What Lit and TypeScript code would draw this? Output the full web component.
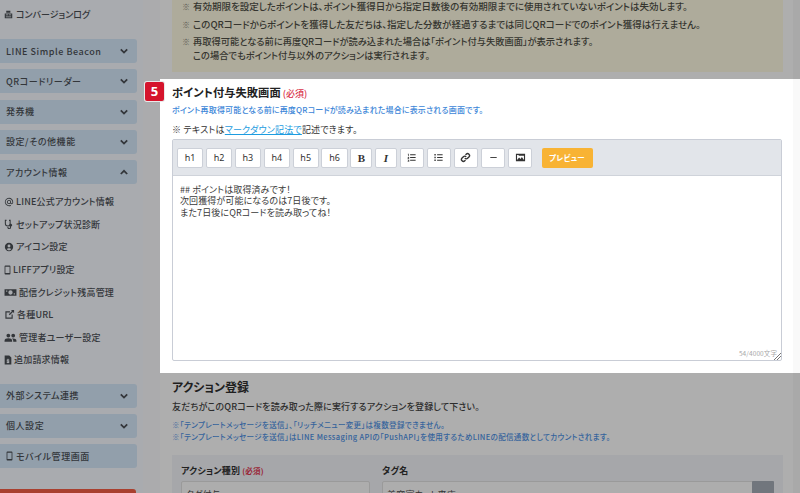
import { LitElement, html, css, svg } from "lit";
import { customElement } from "lit/decorators.js";

const I = (d: any, w = 12, h = w, vb = "0 0 24 24") => html`<svg class="ic" width=${w} height=${h} viewBox=${vb} fill="currentColor">${d}</svg>`;
const icons: Record<string, any> = {
  log: svg`<path d="M2 9h20v13H2zM6 2h11v5H6z"/><path d="M5 12h6v2H5zM13 12h6v2h-6zM5 17h14v2H5z" fill="#a9abaf"/>`,
  at: svg`<path d="M12 2a10 10 0 1 0 5 18.7l-1-1.8A8 8 0 1 1 20 12v1.5a1.5 1.5 0 0 1-3 0V12a5 5 0 1 0-1.5 3.5A3.5 3.5 0 0 0 22 13.500V12A10 10 0 0 0 12 2zm0 13a3 3 0 1 1 0-6 3 3 0 0 1 0 6z"/>`,
  steth: svg`<path d="M2 2v9a7 7 0 0 0 14 0V2h-4v2.500h1.500V11a4.500 4.500 0 0 1-9 0V4.500H6V2zM8 19v1a4.500 4.500 0 0 0 9 0v-2a3.500 3.500 0 1 0-2.500 0v2a2 2 0 0 1-4 0v-1z"/>`,
  user: svg`<path fill-rule="evenodd" d="M12 2a10 10 0 1 1 0 20 10 10 0 0 1 0-20zm0 4a3.500 3.500 0 1 0 0 7 3.500 3.500 0 0 0 0-7zm0 9c-2.500 0-4.500 1-5.500 2.500a8 8 0 0 0 11 0C16.500 16 14.500 15 12 15z"/>`,
  phone: svg`<path fill-rule="evenodd" d="M7 1h10a2 2 0 0 1 2 2v18a2 2 0 0 1-2 2H7a2 2 0 0 1-2-2V3a2 2 0 0 1 2-2zm0 3v15h10V4z"/>`,
  money: svg`<path fill-rule="evenodd" d="M1 6h22v12H1zm11 2a4 4 0 1 0 0 8 4 4 0 0 0 0-8zM4 8.500v2h2v-2zm14 5v2h2v-2z"/>`,
  ext: svg`<path d="M3 5h10v2.500H5.500v11h11V12H19v9H3z"/><path d="M15 2h7v7l-2.500-2.500-7 7-2-2 7-7z"/>`,
  users: svg`<path d="M8 5a3.500 3.500 0 1 1 0 7 3.500 3.500 0 0 1 0-7zM17 5a3.500 3.500 0 1 1 0 7 3.500 3.500 0 0 1 0-7zM1 20v-2c0-3 3-4.500 7-4.500s7 1.500 7 4.500v2zM17 20v-2c0-2-1-3.300-2.300-4.200 4.800-.6 8.300 1 8.300 4.200v2z"/>`,
  bill: svg`<path fill-rule="evenodd" d="M4 1h11l5 5v17H4zm7 8v2H9v5h4v1H9v2h2v1h2v-1h2v-5h-4v-1h4v-2h-2V9z"/>`,
  ol: svg`<path d="M9 5h12v2H9zM9 11h12v2H9zM9 17h12v2H9zM4 4h2v5H4.600V5.500H4zM3.500 11H7v1L5.200 14H7v1H3.500v-1L5.300 12H3.500zM3.500 17H7v4H3.500v-1h2.200v-.5H4.500v-.8h1.200v-.7H3.500z"/>`,
  ul: svg`<path d="M9 5h12v2H9zM9 11h12v2H9zM9 17h12v2H9zM3 4.500h3v3H3zM3 10.500h3v3H3zM3 16.500h3v3H3z"/>`,
  link: svg`<path fill="none" stroke="currentColor" stroke-width="3" d="M10.500 13.500a4 4 0 0 0 6 .3l3-3a4.200 4.200 0 0 0-6-6l-1.500 1.500M13.500 10.500a4 4 0 0 0-6-.3l-3 3a4.200 4.200 0 0 0 6 6l1.500-1.500"/>`,
  hr: svg`<path d="M5 11h14v2H5z"/>`,
  img: svg`<path fill-rule="evenodd" d="M2 4h20v16H2zm2.500 4v9.500L9 12l3 3 3-4 4.500 6.500V8zM8 6.500H4.500V8H8z"/>`,
};

const chev = (up = false) => html`<svg class="chev" width="8" height="6" viewBox="0 0 10 7" fill="none" stroke="currentColor" stroke-width="2.200"><path d=${up ? "M1 6l4-4 4 4" : "M1 1.500l4 4 4-4"}/></svg>`;

@customElement("app-side")
class AppSide extends LitElement {
  static styles = css`
    :host { display: flex; flex-direction: column; width: 143px; flex: none; background: #a9abaf; overflow: hidden; color: #33363a; height: 493px; font-feature-settings: "palt"; }
    .log { display: flex; align-items: center; gap: 3px; height: 15px; margin: 7px 0 17px 4px; font-size: 9px; font-weight: 500; letter-spacing: 0; white-space: nowrap; flex: none; }
    .grp { box-sizing: border-box; display: flex; flex: none; align-items: center; justify-content: space-between; width: 137px; height: 24px; margin-bottom: 6.300px; padding: 0 9px 0 6px; background: #929fab; border-radius: 0 3px 3px 0; font-size: 9px; font-weight: 500; letter-spacing: .55px; white-space: nowrap; }
    .sub { display: flex; flex: none; flex-direction: column; padding: 0 0 12.400px 4px; }
    .it { display: flex; flex: none; align-items: center; gap: 2px; height: 22.600px; font-size: 9px; font-weight: 500; letter-spacing: .2px; white-space: nowrap; }
    .bottom { margin-top: 14px; width: 136px; height: 30px; background: #a9402f; border-radius: 0 3px 3px 0; flex: none; }
    .ph { justify-content: flex-start; gap: 3px; }
    .ic { flex: none; }
  `;
  render() {
    const grp = (t: string, up = false) => html`<div class="grp"><span>${t}</span>${chev(up)}</div>`;
    const it = (ic: string, t: string, w = 10, h = w, vb = "0 0 24 24") => html`<div class="it">${I(icons[ic], w, h, vb)}<span>${t}</span></div>`;
    return html`
      <div class="log">${I(icons.log, 9)}<span>コンバージョンログ</span></div>
      ${grp("LINE Simple Beacon")}${grp("QRコードリーダー")}${grp("発券機")}${grp("設定/その他機能")}${grp("アカウント情報", true)}
      <div class="sub">
        ${it("at", "LINE公式アカウント情報")}${it("steth", "セットアップ状況診断", 10)}${it("user", "アイコン設定", 10)}${it("phone", "LIFFアプリ設定", 7, 10, "4 0 16 24")}${it("money", "配信クレジット残高管理", 13, 13)}${it("ext", "各種URL", 11)}${it("users", "管理者ユーザー設定", 13, 13)}${it("bill", "追加請求情報", 8, 10, "3 0 18 24")}
      </div>
      ${grp("外部システム連携")}${grp("個人設定")}
      <div class="grp ph">${I(icons.phone, 7, 10, "4 0 16 24")}<span>モバイル管理画面</span></div>
      <div class="bottom"></div>
    `;
  }
}

@customElement("app-root")
class AppRoot extends LitElement {
  static styles = css`
    :host { display: block; width: 800px; height: 493px; overflow: hidden; font-family: "Noto Sans CJK JP", "Noto Sans", sans-serif; background: #ababad; color: #2c2c2c; font-feature-settings: "palt"; }
    .page { display: flex; height: 493px; position: relative; }
    .main { flex: 1; min-width: 0; display: flex; flex-direction: column; margin-left: 17px; background: #aeaeae; }
    .strip { position: absolute; right: 0; top: 0; bottom: 0; width: 7px; background: rgba(0,0,0,.025); }
    .note { box-sizing: border-box; height: 72px; margin: 0 17px 0 12px; background: #aeab9b; padding: 0 0 0 10px; font-size: 9.500px; font-weight: 500; color: #35352f; letter-spacing: 0; line-height: 13.500px; flex: none; }
    .note div { display: flex; white-space: nowrap; margin-bottom: 4px; }
    .note b { font-weight: 500; width: 11px; flex: none; color: #55544c; font-size: 8px; }
    .note .tight { font-size: 9.250px; }
    .gap { height: 7px; flex: none; }
    .panel { position: relative; height: 294px; background: #fff; flex: none; padding: 4px 18px 0 12px; box-sizing: border-box; }
    .badge { position: absolute; left: -15px; top: 3px; width: 19px; height: 19px; background: #d5142c; border-radius: 2px; box-shadow: 0 0 0 1px #e9e9e9; color: #fff; font: 700 13px/19px "Noto Sans", sans-serif; text-align: center; }
    h2 { margin: 0; font-size: 11.300px; font-weight: 700; line-height: 18px; color: #222; white-space: nowrap; letter-spacing: 0; }
    h2 small { font-size: 9px; font-weight: 500; color: #d9324a; margin-left: 2px; }
    .hint { font-size: 8px; font-weight: 500; color: #3c86d8; line-height: 12px; margin-top: 1px; white-space: nowrap; letter-spacing: .15px; }
    .md { font-size: 9px; line-height: 14px; margin-top: 7px; color: #333; white-space: nowrap; letter-spacing: .2px; }
    .md a { color: #1d9ce0; text-decoration: underline; }
    .editor { box-sizing: border-box; width: 610px; height: 222px; margin-top: 2px; border: 1px solid #c9cdd6; border-radius: 2px; background: #fff; position: relative; display: flex; flex-direction: column; }
    .tools { box-sizing: border-box; height: 36px; flex: none; background: #e2e5ea; border-bottom: 1px solid #cfd3da; display: flex; align-items: center; padding: 0 0 0 4px; gap: 2.600px; }
    .btn { box-sizing: border-box; flex: none; width: 24.500px; height: 20px; background: #fff; border: 1px solid #ccd0d8; border-radius: 2px; display: flex; align-items: center; justify-content: center; font: 400 9px "Noto Sans", sans-serif; color: #333; }
    .btn.h { width: 26.300px; }
    .btn.s { width: 22px; font: 700 11px "Liberation Serif", serif; }
    .btn.i { width: 22px; font: italic 700 11px "Liberation Serif", serif; }
    .prev { flex: none; width: 51px; height: 20px; margin-left: 6.500px; background: #f8b334; border-radius: 2px; color: #fff; font-size: 7.500px; font-weight: 700; display: flex; align-items: center; justify-content: center; letter-spacing: .3px; }
    .text { padding: 8px 7px; font-size: 9px; line-height: 11.400px; color: #3a3a3a; letter-spacing: .1px; white-space: pre; }
    .count { position: absolute; right: 4px; bottom: 2px; font-size: 6.500px; color: #a8a8a8; letter-spacing: .1px; }
    .grip { position: absolute; right: 0; bottom: 0; }
    .act { padding: 0 0 0 12px; margin-top: 5px; position: relative; }
    h3 { margin: 0; font-size: 12px; font-weight: 700; line-height: 18px; color: #1f1f1f; letter-spacing: 0; }
    .act p { margin: 4px 0 0; font-size: 9px; line-height: 14px; color: #2c2c2c; font-weight: 500; white-space: nowrap; letter-spacing: .15px; }
    .blue { margin-top: 5px; font-size: 7.500px; line-height: 12.300px; font-weight: 500; color: #34639c; white-space: nowrap; letter-spacing: .35px; }
    .form { box-sizing: border-box; width: 611px; height: 90px; margin-top: 11.500px; background: #a6a7aa; display: flex; gap: 12px; padding: 9px 9px 0; }
    .f { width: 189px; flex: none; font-size: 9px; font-weight: 700; color: #222; line-height: 14px; letter-spacing: .2px; }
    .f.w { flex: 1; position: relative; }
    .f small { font-size: 7.500px; color: #992536; margin-left: 2px; }
    .inp { box-sizing: border-box; height: 24px; margin-top: 3px; background: #adadad; border: 1px solid #9a9a9a; border-radius: 2px; font-weight: 400; font-size: 9px; line-height: 20px; padding: 3px 4px; color: #333; }
    .sq { position: absolute; right: 0; top: 17px; width: 22px; height: 30px; background: #71767d; border-radius: 1px; }
  `;
  render() {
    const tools = ["h1", "h2", "h3", "h4", "h5", "h6"];
    return html`<div class="page">
      <app-side></app-side>
      <div class="main">
        <div class="note">
          <div><b>※</b><span>有効期限を設定したポイントは、ポイント獲得日から指定日数後の有効期限までに使用されていないポイントは失効します。</span></div>
          <div><b>※</b><span>このQRコードからポイントを獲得した友だちは、指定した分数が経過するまでは同じQRコードでのポイント獲得は行えません。</span></div>
          <div><b>※</b><span class="tight">再取得可能となる前に再度QRコードが読み込まれた場合は「ポイント付与失敗画面」が表示されます。<br />この場合でもポイント付与以外のアクションは実行されます。</span></div>
        </div>
        <div class="gap"></div>
        <div class="panel">
          <div class="badge">5</div>
          <h2>ポイント付与失敗画面<small>(必須)</small></h2>
          <div class="hint">ポイント再取得可能となる前に再度QRコードが読み込まれた場合に表示される画面です。</div>
          <div class="md">※ テキストは<a>マークダウン記法で</a>記述できます。</div>
          <div class="editor">
            <div class="tools">
              ${tools.map((t) => html`<div class="btn h">${t}</div>`)}
              <div class="btn s">B</div><div class="btn i">I</div>
              <div class="btn">${I(icons.ol, 11)}</div><div class="btn">${I(icons.ul, 11)}</div><div class="btn">${I(icons.link, 11)}</div><div class="btn">${I(icons.hr, 11)}</div><div class="btn">${I(icons.img, 11)}</div>
              <div class="prev">プレビュー</div>
            </div>
            <div class="text">## ポイントは取得済みです！
次回獲得が可能になるのは7日後です。
また7日後にQRコードを読み取ってね！</div>
            <div class="count">54/4000文字</div>
            <svg class="grip" width="8" height="8" viewBox="0 0 8 8" stroke="#777" fill="none"><path d="M1 8l7-7M4 8l4-4"/></svg>
          </div>
        </div>
        <div class="act">
          <h3>アクション登録</h3>
          <p>友だちがこのQRコードを読み取った際に実行するアクションを登録して下さい。</p>
          <div class="blue">※「テンプレートメッセージを送信」、「リッチメニュー変更」は複数登録できません。<br />※「テンプレートメッセージを送信」はLINE Messaging APIの「PushAPI」を使用するためLINEの配信通数としてカウントされます。</div>
          <div class="form">
            <div class="f">アクション種別<small>(必須)</small><div class="inp">タグ付与</div></div>
            <div class="f w">タグ名<div class="inp">美容室カット来店</div><div class="sq"></div></div>
          </div>
        </div>
      </div>
      <div class="strip"></div>
    </div>`;
  }
}
